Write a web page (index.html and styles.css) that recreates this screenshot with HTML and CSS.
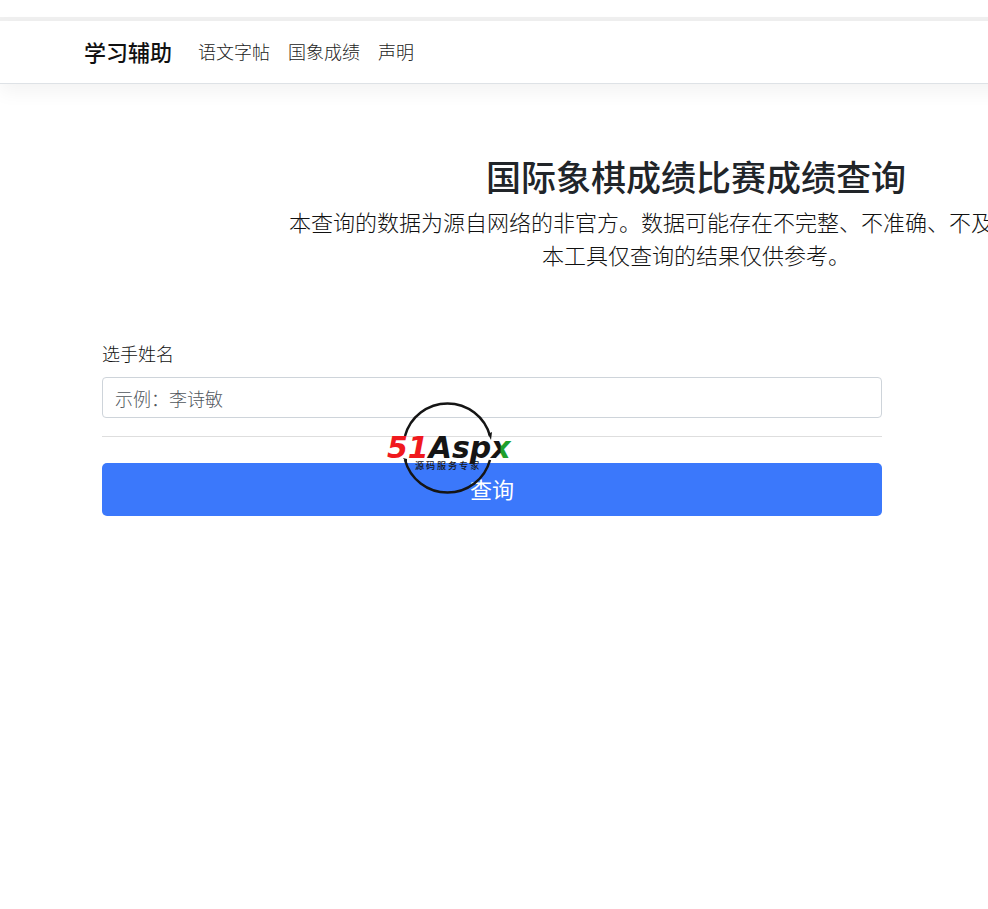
FILE: index.html
```html
<!DOCTYPE html>
<html lang="zh-CN">
<head>
    <meta charset="UTF-8">
    <meta name="viewport" content="width=device-width, initial-scale=1.0">
    <title>国际象棋成绩比赛成绩查询 - 学习辅助</title>
    <link rel="stylesheet" href="styles.css">
</head>
<body>
    <div class="top-strip"></div>
    <header class="navbar">
        <a href="#" class="brand">学习辅助</a>
        <nav class="nav-links">
            <a href="#">语文字帖</a>
            <a href="#">国象成绩</a>
            <a href="#">声明</a>
        </nav>
    </header>

    <main class="container">
        <div class="intro">
            <h1>国际象棋成绩比赛成绩查询</h1>
            <p class="lead">本查询的数据为源自网络的非官方。数据可能存在不完整、不准确、不及时的情况。<br>本工具仅查询的结果仅供参考。</p>
        </div>

        <form class="search-form">
            <label for="player">选手姓名</label>
            <input type="text" id="player" class="text-input" placeholder="示例：李诗敏">
            <hr>
            <button type="submit" class="btn">查询</button>

            <svg class="watermark" width="128" height="92" viewBox="0 0 128 92" aria-label="51Aspx">
                <defs>
                    <linearGradient id="x-fill" gradientUnits="userSpaceOnUse" x1="113" y1="43" x2="114" y2="43">
                        <stop offset="0" stop-color="#151515"/>
                        <stop offset="1" stop-color="#1fa02c"/>
                    </linearGradient>
                </defs>
                <g class="ring">
                    <path d="M18 34A44 44 0 0 1 103 34"/>
                    <path d="M18 58A44 44 0 0 0 103 58"/>
                </g>
                <path class="tip" d="M101 32l4-2-1 8zM16 56l4 1 0 5z"/>
                <text class="logo-text" x="0" y="56"><tspan class="red">51</tspan><tspan>Asp</tspan><tspan fill="url(#x-fill)">x</tspan></text>
                <text class="logo-sub" x="28" y="67">源 码 服 务 专 家</text>
            </svg>
        </form>
    </main>
</body>
</html>
```
FILE: styles.css
```css
:root {
    --primary-color: #3b78fb;
    --text-color: #212529;
    --border-color: #ced4da;
}

* {
    margin: 0;
    padding: 0;
    box-sizing: border-box;
}

html {
    overflow-x: hidden;
}

body {
    min-width: 1392px;
    overflow-x: hidden;
    background: #fff;
    color: #111;
    font-family: "Noto Sans CJK SC", sans-serif;
    font-size: 18px;
    font-weight: 300;
    line-height: 27px;
}

.top-strip {
    height: 21px;
    border-bottom: 4px solid #f0f0f0;
}

.navbar {
    display: flex;
    align-items: center;
    gap: 26px;
    padding: 13px 84px 15px;
    border-bottom: 1px solid #dee2e6;
    box-shadow: 0 8px 18px rgba(0, 0, 0, 0.05);
}

.brand {
    color: #111;
    font-size: 22px;
    font-weight: 500;
    line-height: 34px;
    text-decoration: none;
}

.nav-links {
    display: flex;
    gap: 18px;
}

.nav-links a {
    color: #222;
    text-decoration: none;
}

.container {
    padding: 71px 84px;
}

.intro {
    text-align: center;
    margin-bottom: 69px;
}

.intro h1 {
    color: var(--text-color);
    font-size: 35px;
    font-weight: 500;
    line-height: 42px;
    margin-bottom: 8px;
}

.lead {
    font-size: 22px;
    line-height: 33px;
}

.search-form {
    position: relative;
    width: 66.6667%;
    padding: 0 18px;
}

.search-form label {
    display: block;
    margin-bottom: 10px;
}

.text-input {
    display: block;
    width: 100%;
    height: 41px;
    padding: 0 12px;
    border: 1px solid var(--border-color);
    border-radius: 4px;
    color: var(--text-color);
    font: inherit;
}

.text-input::placeholder {
    color: #50565c;
    opacity: 1;
}

hr {
    margin: 18px 0 26px;
    border: 0;
    border-top: 1px solid #dedede;
}

.btn {
    display: block;
    width: 100%;
    padding: 9px 10px 11px;
    border: 0;
    border-radius: 5px;
    background: var(--primary-color);
    color: #fff;
    font-family: inherit;
    font-size: 22px;
    font-weight: 400;
    line-height: 33px;
}

/* logo lies over the form */
.watermark {
    position: absolute;
    left: 303px;
    top: 62px;
    overflow: visible;
    pointer-events: none;
}

.ring {
    fill: none;
    stroke: #151515;
    stroke-width: 2.5;
}

.tip {
    fill: #151515;
}

.logo-text {
    fill: #151515;
    font: italic bold 30px "DejaVu Sans", sans-serif;
}

.logo-text .red {
    fill: #f0191e;
}

.logo-sub {
    fill: #151515;
    font-size: 9px;
    font-weight: 500;
}
```
